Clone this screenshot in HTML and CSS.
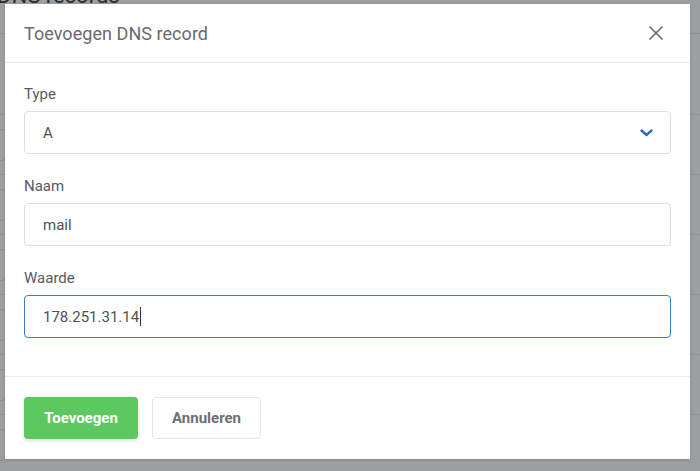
FILE: index.html
```html
<!DOCTYPE html>
<html lang="nl">
<head>
<meta charset="utf-8">
<title>Toevoegen DNS record</title>
<link rel="stylesheet" href="styles.css">
</head>
<body>
<div class="page">
  <h1 class="page-title">DNS records</h1>
  <div class="rows">
    <div class="row"><span class="cell-box"></span></div>
    <div class="row"><span class="cell-box"></span></div>
    <div class="row"><span class="cell-box"></span></div>
    <div class="row"><span class="cell-box"></span></div>
    <div class="row"><span class="cell-box"></span></div>
    <div class="row"><span class="cell-box"></span></div>
  </div>
</div>

<div class="backdrop"></div>

<div class="modal">
  <div class="modal-header">
    <h2 class="modal-title">Toevoegen DNS record</h2>
    <button class="close" aria-label="Sluiten">
      <svg width="14" height="14" viewBox="0 0 14 14"><path d="M1 1 L13 13 M13 1 L1 13" stroke="#6a6a6e" stroke-width="1.7" fill="none" stroke-linecap="round"/></svg>
    </button>
  </div>
  <div class="modal-body">
    <div class="field">
      <label class="label">Type</label>
      <div class="control select">
        <span class="value">A</span>
        <svg class="chevron" width="13" height="8" viewBox="0 0 13 8"><path d="M1.5 1.5 L6.5 6 L11.5 1.5" stroke="#2f6cc0" stroke-width="2.4" fill="none" stroke-linecap="round" stroke-linejoin="round"/></svg>
      </div>
    </div>
    <div class="field">
      <label class="label">Naam</label>
      <div class="control"><span class="value">mail</span></div>
    </div>
    <div class="field">
      <label class="label">Waarde</label>
      <div class="control focused"><span class="value">178.251.31.14</span><span class="caret"></span></div>
    </div>
  </div>
  <div class="modal-footer">
    <button class="btn btn-primary">Toevoegen</button>
    <button class="btn btn-default">Annuleren</button>
  </div>
</div>
</body>
</html>
```

FILE: styles.css
```css
* { box-sizing: border-box; }

html, body {
  margin: 0;
  padding: 0;
  width: 700px;
  height: 471px;
  overflow: hidden;
}

body {
  font-family: Roboto, "Liberation Sans", Arial, sans-serif;
  background: #9d9ea0;
  position: relative;
}

/* underlying page (seen through the backdrop) */
.page {
  padding: 0;
}

.page-title {
  margin: -17px 0 0 -3px;
  font-size: 22px;
  font-weight: 400;
  line-height: 26px;
  color: #2c2c2e;
  border-bottom: 1px solid #8f9092;
  padding-bottom: 24px;
}

.rows {
  margin-top: 80px;
}

.row {
  height: 60px;
  border-top: 1px solid #919294;
  display: flex;
  align-items: center;
}

.cell-box {
  width: 30px;
  height: 32px;
  margin-left: -24px;
  border: 1px solid #8c8d90;
  border-radius: 4px;
}

.backdrop {
  position: absolute;
  inset: 0;
}

/* modal */
.modal {
  position: absolute;
  left: 5px;
  top: 4px;
  width: 685px;
  height: 455px;
  background: #ffffff;
  display: flex;
  flex-direction: column;
  box-shadow: 0 1px 3px rgba(0, 0, 0, 0.15);
}

.modal-header {
  height: 59px;
  flex: none;
  border-bottom: 1px solid #e9e9ef;
  display: flex;
  align-items: center;
  justify-content: space-between;
  padding: 0 27px 0 19px;
}

.modal-title {
  margin: 0;
  font-size: 18px;
  font-weight: 400;
  color: #6a6a6e;
  letter-spacing: 0.05px;
}

.close {
  border: 0;
  background: transparent;
  padding: 0;
  width: 14px;
  height: 14px;
  display: flex;
  cursor: pointer;
}

.modal-body {
  padding: 21px 19px 38px;
  display: flex;
  flex-direction: column;
  gap: 22px;
}

.field {
  display: flex;
  flex-direction: column;
}

.label {
  font-size: 15px;
  line-height: 20px;
  color: #5a5a5e;
  margin-bottom: 7px;
}

.control {
  height: 43px;
  border: 1px solid #dcdde8;
  border-radius: 4px;
  display: flex;
  align-items: center;
  padding: 0 18px;
  font-size: 15px;
  color: #505054;
}

.control.focused {
  border-color: #3a7bd0;
}

.select {
  justify-content: space-between;
  padding-right: 17px;
}

.chevron {
  display: block;
}

.caret {
  display: inline-block;
  width: 1px;
  height: 19px;
  background: #333;
  margin-left: 1px;
}

.modal-footer {
  border-top: 1px solid #ececf2;
  padding: 20px 19px;
  display: flex;
  gap: 14px;
  flex: 1;
  align-items: flex-start;
}

.btn {
  height: 42px;
  border-radius: 4px;
  font-family: Roboto, "Liberation Sans", Arial, sans-serif;
  font-size: 15px;
  font-weight: 700;
  padding: 0;
  cursor: pointer;
}

.btn-primary {
  width: 114px;
  background: #5dc85f;
  border: 0;
  color: #ffffff;
  box-shadow: 0 2px 4px rgba(0, 0, 0, 0.12);
}

.btn-default {
  width: 109px;
  background: #ffffff;
  border: 1px solid #e6e6ea;
  color: #6e6e74;
}
```
